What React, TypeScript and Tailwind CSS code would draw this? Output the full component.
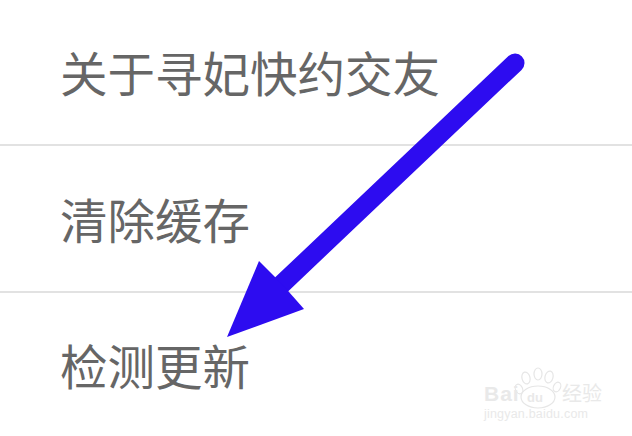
import React from 'react';

const rows = ['关于寻妃快约交友', '清除缓存', '检测更新'];

function Arrow() {
  return (
    <svg className="absolute left-0 top-0" width="632" height="436" viewBox="0 0 632 436" fill="none">
      <path d="M515 63 L282 284" stroke="#2d0cf0" strokeWidth="19" strokeLinecap="round" />
      <path d="M227 337 L259 261 L275 277 L289 292 L304 309 Z" fill="#2d0cf0" />
    </svg>
  );
}

function Watermark() {
  return (
    <div className="absolute left-[484px] top-[366px] w-[125px] h-[60px] text-[#e9e9e9] font-['Liberation_Sans',sans-serif]">
      <svg className="absolute left-[24px] top-0" width="60" height="44" viewBox="0 0 60 44" fill="none" stroke="#e6e6e6" strokeWidth="1.2">
        <ellipse cx="18" cy="12" rx="4" ry="6" transform="rotate(-15 18 12)" />
        <ellipse cx="30" cy="8" rx="4" ry="6" />
        <ellipse cx="41" cy="11" rx="4" ry="6" transform="rotate(15 41 11)" />
        <ellipse cx="49" cy="21" rx="3.5" ry="5" transform="rotate(25 49 21)" />
        <ellipse cx="11" cy="23" rx="3.5" ry="5" transform="rotate(-25 11 23)" />
        <ellipse cx="30" cy="31" rx="17" ry="11" />
      </svg>
      <span className="absolute left-[0px] top-[17px] text-[21px] font-bold leading-none tracking-[1px]">Bai</span>
      <span className="absolute left-[43px] top-[25px] text-[13px] font-bold leading-none">du</span>
      <span className="absolute left-[78px] top-[17px] text-[20px] leading-none whitespace-nowrap font-['Noto_Sans_CJK_SC',sans-serif]">经验</span>
      <span className="absolute left-[0px] top-[42px] text-[12.5px] leading-none whitespace-nowrap tracking-[0.2px]">jingyan.baidu.com</span>
    </div>
  );
}

export default function App() {
  return (
    <div className="relative w-[632px] h-[436px] overflow-hidden bg-white font-['Noto_Sans_CJK_SC',sans-serif] text-[#666666]">
      {rows.map((row, i) => (
        <div
          key={row}
          className={`flex items-center pl-[60px] text-[47.5px] leading-none ${i === 0 ? 'h-[146px] border-b-2 border-[#e2e2e2]' : i === 1 ? 'h-[147px] border-b-2 border-[#e2e2e2]' : 'h-[143px]'}`}
        >
          {row}
        </div>
      ))}
      <Watermark />
      <Arrow />
    </div>
  );
}
